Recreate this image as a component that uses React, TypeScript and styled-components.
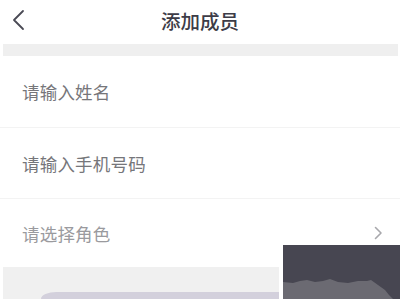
import React from "react";
import styled, { createGlobalStyle } from "styled-components";

const Global = createGlobalStyle`
  html, body { margin: 0; padding: 0; background: #ffffff; }
  body { font-family: "Noto Sans CJK SC", "Noto Sans", sans-serif; overflow: hidden; }
`;

const Page = styled.div`
  position: relative;
  width: 400px;
  height: 299px;
  overflow: hidden;
  background: #ffffff;
`;

const Header = styled.div`
  position: relative;
  height: 44px;
  display: flex;
  align-items: center;
  justify-content: center;
`;

const BackButton = styled.div`
  position: absolute;
  left: 11px;
  top: 9px;
  width: 16px;
  height: 22px;
  display: flex;
`;

const Title = styled.div`
  font-size: 19.5px;
  font-weight: 500;
  color: #3d3c47;
  letter-spacing: 0px;
  margin-top: -4px;
`;

const Strip = styled.div`
  height: 12px;
  margin: 0 2px 0 3px;
  background: #efefef;
`;

const Row = styled.div<{ $h: number; $divider?: boolean }>`
  height: ${(p) => p.$h}px;
  display: flex;
  align-items: center;
  justify-content: space-between;
  padding: 0 17px 0 22px;
  border-bottom: ${(p) => (p.$divider ? "1px solid #f3f3f3" : "none")};
  box-sizing: border-box;
`;

const Placeholder = styled.span<{ $light?: boolean }>`
  font-size: 17.5px;
  color: ${(p) => (p.$light ? "#9a9a9e" : "#76767a")};
  letter-spacing: 0.2px;
`;

const Bottom = styled.div`
  display: flex;
  padding-left: 3px;
  height: 32px;
`;

const GrayPanel = styled.div`
  width: 276px;
  height: 32px;
  background: #f0f0f0;
  display: flex;
  flex-direction: column;
  justify-content: flex-end;
`;

const Pill = styled.div`
  height: 7px;
  margin-left: 38px;
  background: #d3d0dc;
  border-top-left-radius: 22px 10px;
`;

const DarkOverlay = styled.div`
  position: absolute;
  left: 283px;
  top: 245px;
  width: 117px;
  height: 54px;
  background: #474651;
`;

export default function App() {
  return (
    <Page>
      <Global />
      <Header>
        <BackButton>
          <svg width="16" height="22" viewBox="0 0 16 22">
            <path d="M12 2 L3 11 L12 20" fill="none" stroke="#4a4a55" strokeWidth="1.8" strokeLinecap="round" strokeLinejoin="round" />
          </svg>
        </BackButton>
        <Title>添加成员</Title>
      </Header>
      <Strip />
      <Row $h={72} $divider>
        <Placeholder>请输入姓名</Placeholder>
      </Row>
      <Row $h={71} $divider>
        <Placeholder>请输入手机号码</Placeholder>
      </Row>
      <Row $h={68}>
        <Placeholder $light>请选择角色</Placeholder>
        <svg width="10" height="16" viewBox="0 0 10 16">
          <path d="M2.5 2.5 L8 8 L2.5 13.5" fill="none" stroke="#a8a8ac" strokeWidth="1.6" strokeLinecap="round" strokeLinejoin="round" />
        </svg>
      </Row>
      <Bottom>
        <GrayPanel>
          <Pill />
        </GrayPanel>
      </Bottom>
      <DarkOverlay>
        <svg width="117" height="54" viewBox="0 0 117 54">
          <path
            d="M0 37 L10 38 L17 36 L24 35 L32 37 L40 36 L47 34 L55 37 L65 38 L75 36 L84 36 L88 35 L95 40 L102 45 L106 50 L110 54 L0 54 Z"
            fill="#6b6a72"
          />
        </svg>
      </DarkOverlay>
    </Page>
  );
}
